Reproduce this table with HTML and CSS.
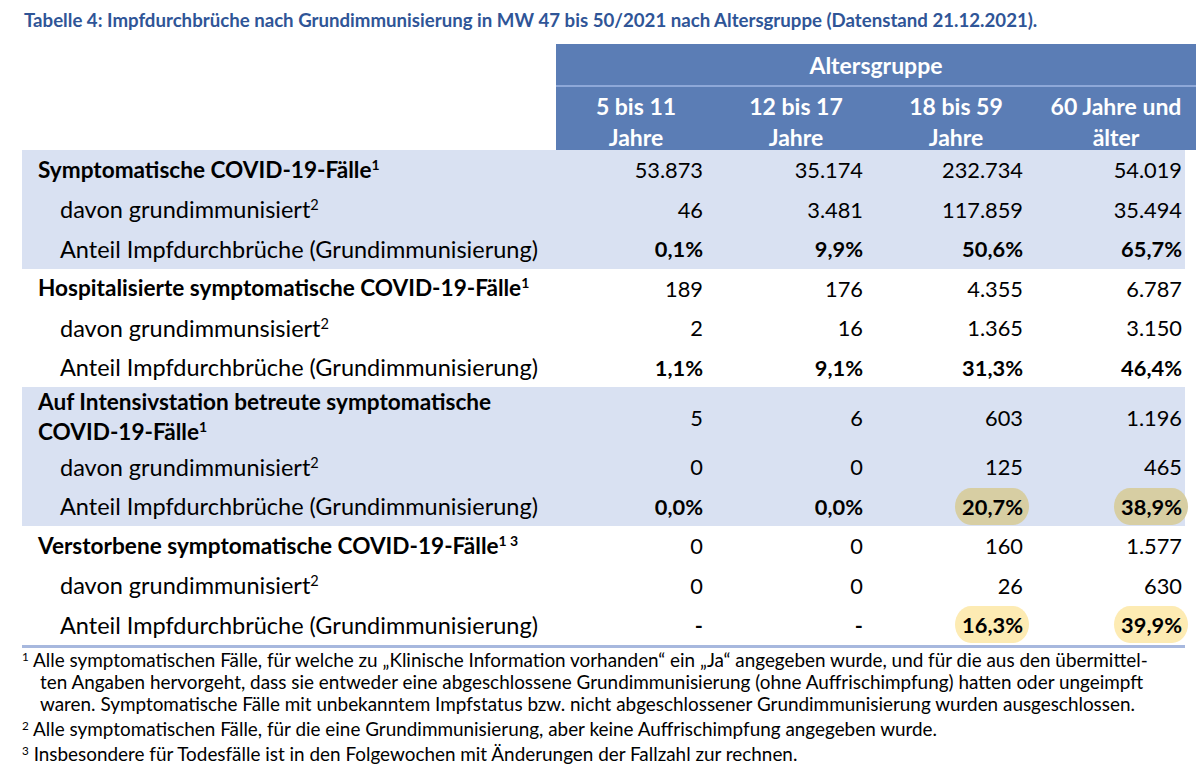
FILE: index.html
```html
<!DOCTYPE html>
<html lang="de">
<head>
<meta charset="utf-8">
<link rel="stylesheet" href="styles.css">
</head>
<body>
<div class="page">
  <h1 class="title">Tabelle 4: Impfdurchbrüche nach Grundimmunisierung in MW 47 bis 50/2021 nach Altersgruppe (Datenstand 21.12.2021).</h1>

  <div class="thead">
    <div class="th-group">Altersgruppe</div>
    <div class="th-cols">
      <div class="th">5 bis 11<br>Jahre</div>
      <div class="th">12 bis 17<br>Jahre</div>
      <div class="th">18 bis 59<br>Jahre</div>
      <div class="th">60 Jahre und<br>älter</div>
    </div>
  </div>

  <div class="section shaded">
    <div class="row">
      <div class="label main">Symptomatische COVID-19-Fälle<sup>1</sup></div>
      <div class="num">53.873</div><div class="num">35.174</div><div class="num">232.734</div><div class="num last">54.019</div>
    </div>
    <div class="row">
      <div class="label sub">davon grundimmunisiert<sup>2</sup></div>
      <div class="num">46</div><div class="num">3.481</div><div class="num">117.859</div><div class="num last">35.494</div>
    </div>
    <div class="row">
      <div class="label sub">Anteil Impfdurchbrüche (Grundimmunisierung)</div>
      <div class="num bold">0,1%</div><div class="num bold">9,9%</div><div class="num bold">50,6%</div><div class="num bold last">65,7%</div>
    </div>
  </div>

  <div class="section">
    <div class="row">
      <div class="label main">Hospitalisierte symptomatische COVID-19-Fälle<sup>1</sup></div>
      <div class="num">189</div><div class="num">176</div><div class="num">4.355</div><div class="num last">6.787</div>
    </div>
    <div class="row">
      <div class="label sub">davon grundimmunsisiert<sup>2</sup></div>
      <div class="num">2</div><div class="num">16</div><div class="num">1.365</div><div class="num last">3.150</div>
    </div>
    <div class="row">
      <div class="label sub">Anteil Impfdurchbrüche (Grundimmunisierung)</div>
      <div class="num bold">1,1%</div><div class="num bold">9,1%</div><div class="num bold">31,3%</div><div class="num bold last">46,4%</div>
    </div>
  </div>

  <div class="section shaded">
    <div class="row tall">
      <div class="label main">Auf Intensivstation betreute symptomatische<br>COVID-19-Fälle<sup>1</sup></div>
      <div class="num">5</div><div class="num">6</div><div class="num">603</div><div class="num last">1.196</div>
    </div>
    <div class="row">
      <div class="label sub">davon grundimmunisiert<sup>2</sup></div>
      <div class="num">0</div><div class="num">0</div><div class="num">125</div><div class="num last">465</div>
    </div>
    <div class="row">
      <div class="label sub">Anteil Impfdurchbrüche (Grundimmunisierung)</div>
      <div class="num bold">0,0%</div><div class="num bold">0,0%</div><div class="num bold"><span class="pill olive">20,7%</span></div><div class="num bold last"><span class="pill olive">38,9%</span></div>
    </div>
  </div>

  <div class="section bottom">
    <div class="row">
      <div class="label main">Verstorbene symptomatische COVID-19-Fälle<sup>1 3</sup></div>
      <div class="num">0</div><div class="num">0</div><div class="num">160</div><div class="num last">1.577</div>
    </div>
    <div class="row">
      <div class="label sub">davon grundimmunisiert<sup>2</sup></div>
      <div class="num">0</div><div class="num">0</div><div class="num">26</div><div class="num last">630</div>
    </div>
    <div class="row">
      <div class="label sub">Anteil Impfdurchbrüche (Grundimmunisierung)</div>
      <div class="num bold">-</div><div class="num bold">-</div><div class="num bold"><span class="pill yellow">16,3%</span></div><div class="num bold last"><span class="pill yellow">39,9%</span></div>
    </div>
  </div>

  <div class="notes">
    <p class="note"><sup>1</sup> Alle symptomatischen Fälle, für welche zu „Klinische Information vorhanden“ ein „Ja“ angegeben wurde, und für die aus den übermittel-<br>ten Angaben hervorgeht, dass sie entweder eine abgeschlossene Grundimmunisierung (ohne Auffrischimpfung) hatten oder ungeimpft<br>waren. Symptomatische Fälle mit unbekanntem Impfstatus bzw. nicht abgeschlossener Grundimmunisierung wurden ausgeschlossen.</p>
    <p class="note"><sup>2</sup> Alle symptomatischen Fälle, für die eine Grundimmunisierung, aber keine Auffrischimpfung angegeben wurde.</p>
    <p class="note"><sup>3</sup> Insbesondere für Todesfälle ist in den Folgewochen mit Änderungen der Fallzahl zur rechnen.</p>
  </div>
</div>
</body>
</html>
```

FILE: styles.css
```css
* { box-sizing: border-box; }
html, body { margin: 0; padding: 0; background: #ffffff; }
body {
  font-family: Lato, "Open Sans", "Liberation Sans", sans-serif;
  color: #000000;
}
.page {
  width: 1200px;
  height: 776px;
  padding: 7px 0 0 22px;
  overflow: hidden;
}
.title {
  margin: 0 0 0 2px;
  font-size: 18.65px;
  line-height: 26px;
  font-weight: 700;
  color: #2F5597;
  white-space: nowrap;
}
.thead {
  margin: 11px 0 0 534px;
  width: 640px;
  background: #5B7DB5;
  color: #ffffff;
  font-weight: 700;
  font-size: 23px;
}
.th-group {
  height: 43px;
  line-height: 43px;
  text-align: center;
  border-bottom: 2px solid #8EA8D8;
}
.th-cols {
  display: grid;
  grid-template-columns: repeat(4, 160px);
  padding: 4px 0 0;
  height: 63px;
}
.th {
  text-align: center;
  line-height: 31px;
}
.section {
  width: 1163px;
}
.section.shaded { background: #D9E1F2; }
.section.bottom { border-bottom: 3px solid #A7B8DE; }
.row {
  display: grid;
  grid-template-columns: 534px 160px 160px 160px 149px;
  height: 39.5px;
  align-items: center;
  font-size: 23.5px;
}
.row.tall { height: 60px; }
.label { white-space: nowrap; line-height: 30px; }
.label.main { padding-left: 16px; font-weight: 700; font-size: 22.6px; }
.label.sub { padding-left: 38px; }
.num { text-align: right; padding-right: 13px; white-space: nowrap; font-size: 21.8px; }
.num.last { padding-right: 3px; }
.num.bold { font-weight: 700; }
sup { font-size: 0.62em; line-height: 0; vertical-align: 0.55em; }
.label.main sup { font-weight: 700; }
.pill {
  display: inline-block;
  margin-right: -6px;
  padding: 0 6px 0 7px;
  height: 37px;
  line-height: 37px;
  border-radius: 16px / 50%;
}
.pill.olive { background: #D7CEA3; }
.pill.yellow { background: #FDEBB3; }
.notes { margin-top: 1px; font-size: 18.9px; }
.note {
  margin: 0;
  line-height: 22px;
  padding-left: 18px;
  text-indent: -18px;
  margin-bottom: 3px;
}
.note sup { font-size: 0.62em; vertical-align: 0.5em; }
```
